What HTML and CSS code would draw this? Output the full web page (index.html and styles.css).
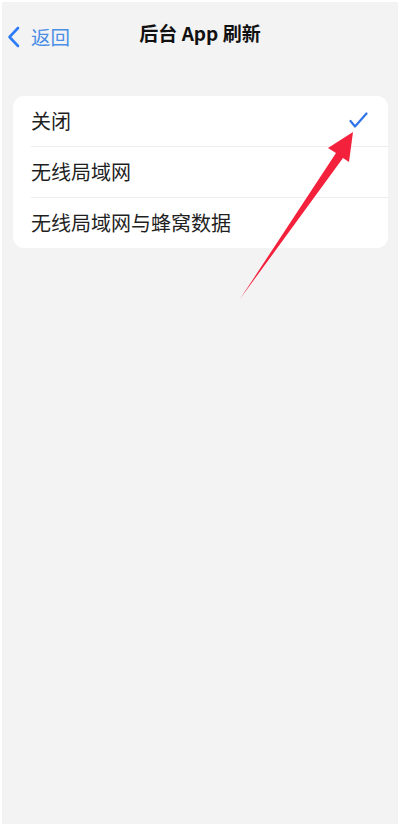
FILE: index.html
```html
<!DOCTYPE html>
<html lang="zh">
<head>
<meta charset="utf-8">
<link rel="stylesheet" href="styles.css">
</head>
<body>
<div class="screen">
  <div class="nav">
    <div class="back">
      <svg class="chev" width="13" height="22" viewBox="0 0 13 22"><path d="M11 2 L2.5 11 L11 20" fill="none" stroke="#2f7cf6" stroke-width="2.6" stroke-linecap="round" stroke-linejoin="round"/></svg>
      <span class="back-text">返回</span>
    </div>
    <div class="title">后台 App 刷新</div>
  </div>
  <div class="card">
    <div class="row"><span class="label">关闭</span>
      <svg class="check" width="19" height="17" viewBox="0 0 19 17"><path d="M1.5 9 L6 14.5 L17.5 1.5" fill="none" stroke="#2f74e8" stroke-width="2.2" stroke-linecap="round" stroke-linejoin="round"/></svg>
    </div>
    <div class="row"><span class="label">无线局域网</span></div>
    <div class="row"><span class="label">无线局域网与蜂窝数据</span></div>
  </div>
  <svg class="arrow" width="400" height="826" viewBox="0 0 400 826"><polygon points="353,132 328,148 336,153 240,299 343,158 349,162" fill="#f4213c"/></svg>
</div>
</body>
</html>
```
FILE: styles.css
```css
html, body { margin: 0; padding: 0; }
body { background: #ffffff; width: 400px; height: 826px; overflow: hidden; font-family: "Noto Sans CJK SC", "Noto Sans", sans-serif; }
.screen { position: relative; margin: 2px; height: 822px; background: #f3f3f4; box-sizing: border-box; padding-top: 0; }
.nav { position: relative; height: 68px; display: flex; align-items: center; justify-content: center; padding-bottom: 6px; box-sizing: border-box; }
.back { position: absolute; left: 5px; top: 23px; display: flex; align-items: center; gap: 11px; }
.back-text { color: #4a8ee6; font-size: 19.5px; line-height: 24px; }
.title { font-size: 19px; font-weight: 700; color: #111; line-height: 24px; margin-top: 0; }
.card { margin: 26px 10px 0 11px; background: #fff; border-radius: 11px; overflow: hidden; }
.row { height: 51px; display: flex; align-items: center; justify-content: space-between; margin-left: 18px; padding-right: 20px; border-top: 1px solid #ececee; box-sizing: border-box; }
.row:first-child { border-top: none; height: 50px; }
.label { font-size: 20px; color: #1f1f1f; margin-top: -2px; }
.check { margin-top: -2px; }
.arrow { position: absolute; left: -2px; top: -2px; pointer-events: none; }
```
